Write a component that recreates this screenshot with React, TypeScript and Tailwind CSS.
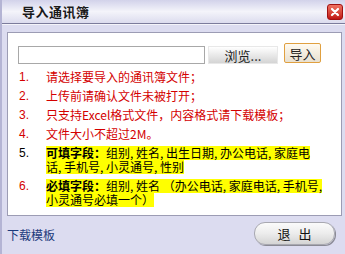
import React from 'react';

const font = { fontFamily: '"Noto Sans CJK SC", "Liberation Sans", sans-serif' };

interface Item {
  num: string;
  numColor: string;
  lines: React.ReactNode[];
  highlight?: boolean;
}

export default function App() {
  const items: Item[] = [
    { num: '1.', numColor: 'text-[#d40000]', lines: ['请选择要导入的通讯簿文件；'] },
    { num: '2.', numColor: 'text-[#d40000]', lines: ['上传前请确认文件未被打开；'] },
    { num: '3.', numColor: 'text-[#d40000]', lines: ['只支持Excel格式文件，内容格式请下载模板；'] },
    { num: '4.', numColor: 'text-[#d40000]', lines: ['文件大小不超过2M。'] },
    {
      num: '5.',
      numColor: 'text-black',
      highlight: true,
      lines: [
        <>
          <b>可填字段：</b>组别, 姓名, 出生日期, 办公电话, 家庭电
        </>,
        '话, 手机号, 小灵通号, 性别',
      ],
    },
    {
      num: '6.',
      numColor: 'text-[#d40000]',
      highlight: true,
      lines: [
        <>
          <b>必填字段：</b>组别, 姓名 （办公电话, 家庭电话, 手机号,
        </>,
        '小灵通号必填一个）',
      ],
    },
  ];

  return (
    <div
      className="w-[345px] h-[254px] bg-[#dcdcf0] flex flex-col border-l-2 border-[#b4b4d4] overflow-hidden"
      style={font}
    >
      {/* Title bar */}
      <div className="h-[23px] flex items-center bg-gradient-to-b from-[#d2d2ea] via-[#f4f4fa] to-[#dcdcee]">
        <span className="ml-[20px] text-[13px] font-bold text-[#1a1a1a] tracking-[0.5px]">导入通讯簿</span>
        <div className="ml-auto mr-[2px] w-[16px] h-[16px] rounded-[3px] bg-gradient-to-b from-[#f07060] to-[#c01010] border border-[#a01010] flex items-center justify-center">
          <svg width="10" height="10" viewBox="0 0 10 10">
            <path d="M2 2 L8 8 M8 2 L2 8" stroke="white" strokeWidth="2.2" strokeLinecap="round" />
          </svg>
        </div>
      </div>
      <div className="h-px bg-[#7c7c9c]" />
      <div className="h-px bg-[#f4f4fa]" />

      {/* Main panel */}
      <div className="ml-[5px] mr-[3px] mt-[7px] h-[184px] bg-white border border-[#9c9cb4] px-[10px] pt-[13px]">
        <div className="flex items-start">
          <div className="w-[187px] h-[18px] border border-[#a8a8a8] bg-white" />
          <div className="ml-[3px] w-[70px] h-[18px] bg-gradient-to-b from-[#ffffff] to-[#d4d4d4] border border-[#e8e8e8] flex items-center justify-center text-[13px] leading-none text-[#222]">
            浏览...
          </div>
          <div className="ml-[6px] -mt-[3px] w-[37px] h-[20px] border border-[#e0a040] rounded-[2px] bg-gradient-to-b from-[#fffaf0] to-[#e8e0d0] flex items-center justify-center text-[13px] leading-none text-[#222]">
            导入
          </div>
        </div>

        <div className="mt-[6px] flex flex-col gap-[5px] text-[12px] leading-[14px]">
          {items.map((it, idx) => (
            <div key={idx} className="flex">
              <span className={`w-[28px] pl-px ${it.numColor}`} style={{ fontFamily: '"Liberation Sans", sans-serif' }}>
                {it.num}
              </span>
              <div className="flex flex-col whitespace-nowrap">
                {it.lines.map((line, i) => (
                  <div key={i} className="h-[14px]">
                    <span
                      className={
                        it.highlight
                          ? 'inline-block h-[14px] leading-[14px] bg-[#ffff00] text-black'
                          : 'inline-block h-[14px] leading-[14px] text-[#d40000]'
                      }
                    >
                      {line}
                    </span>
                  </div>
                ))}
              </div>
            </div>
          ))}
        </div>
      </div>

      {/* Bottom bar */}
      <div className="flex items-start justify-between mt-[6px] pl-[5px] pr-[10px]">
        <span className="mt-[4px] text-[12px] text-[#1c3a7c]">下载模板</span>
        <div className="w-[81px] h-[23px] rounded-[11px] bg-gradient-to-b from-[#fbfbfb] via-[#ececec] to-[#d4d4d4] border border-[#a8a8b0] shadow-[1px_1px_0_#8a8a94] flex items-center justify-center text-[13px] tracking-[8px] text-[#111]">
          <span className="ml-[8px]">退出</span>
        </div>
      </div>
    </div>
  );
}
